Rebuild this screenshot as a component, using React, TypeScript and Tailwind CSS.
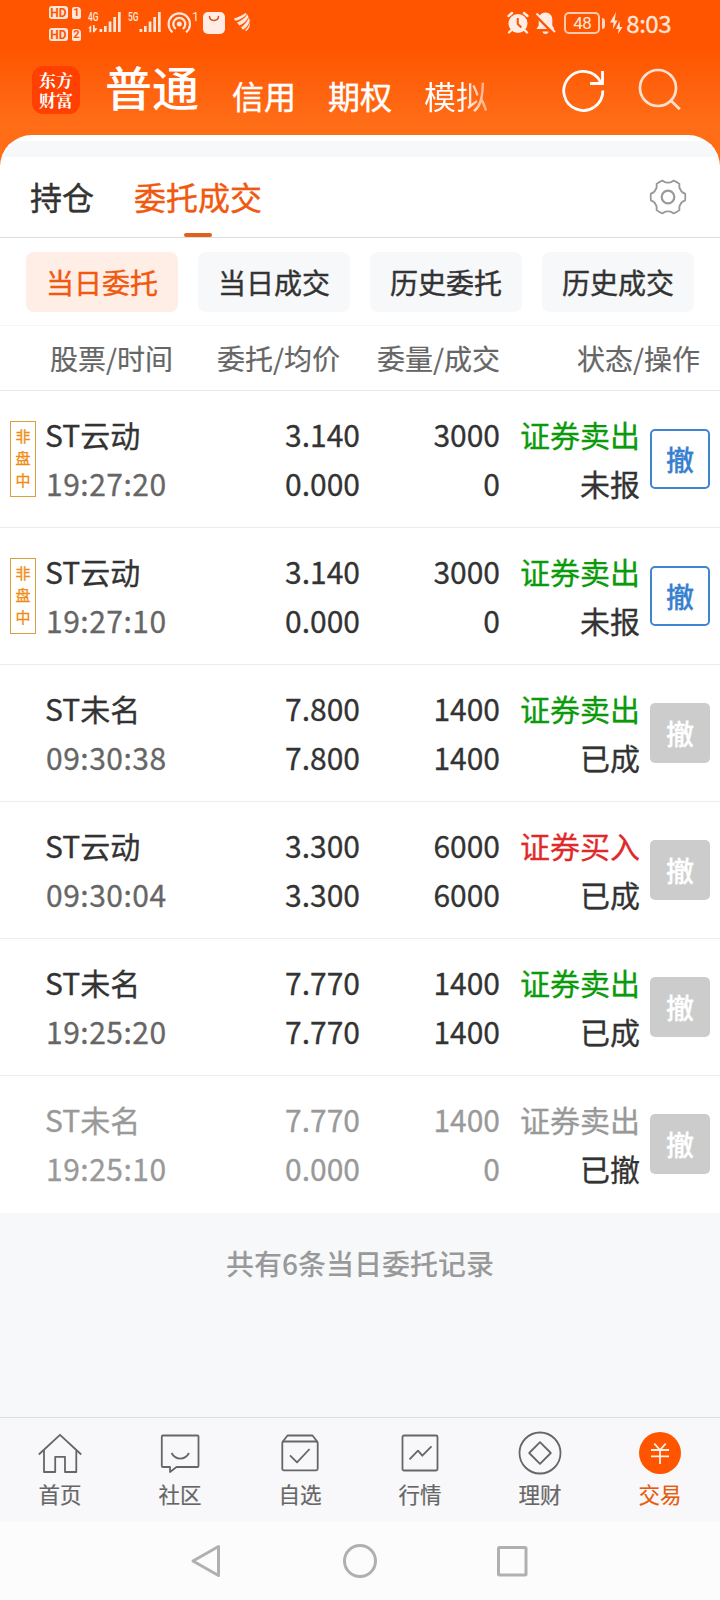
import { ReactNode } from 'react';
import clsx from 'clsx';

interface Order {
  name: string;
  time: string;
  price: string;
  avgPrice: string;
  volume: string;
  filled: string;
  side: string;
  status: string;
  tone: 'sell' | 'buy' | 'muted';
  afterHours?: boolean;
  cancellable?: boolean;
}

const orders: Order[] = [
  { name: 'ST云动', time: '19:27:20', price: '3.140', avgPrice: '0.000', volume: '3000', filled: '0', side: '证券卖出', status: '未报', tone: 'sell', afterHours: true, cancellable: true },
  { name: 'ST云动', time: '19:27:10', price: '3.140', avgPrice: '0.000', volume: '3000', filled: '0', side: '证券卖出', status: '未报', tone: 'sell', afterHours: true, cancellable: true },
  { name: 'ST未名', time: '09:30:38', price: '7.800', avgPrice: '7.800', volume: '1400', filled: '1400', side: '证券卖出', status: '已成', tone: 'sell' },
  { name: 'ST云动', time: '09:30:04', price: '3.300', avgPrice: '3.300', volume: '6000', filled: '6000', side: '证券买入', status: '已成', tone: 'buy' },
  { name: 'ST未名', time: '19:25:20', price: '7.770', avgPrice: '7.770', volume: '1400', filled: '1400', side: '证券卖出', status: '已成', tone: 'sell' },
  { name: 'ST未名', time: '19:25:10', price: '7.770', avgPrice: '0.000', volume: '1400', filled: '0', side: '证券卖出', status: '已撤', tone: 'muted' },
];

const filters = ['当日委托', '当日成交', '历史委托', '历史成交'];

// Six-toothed gear outline centred on 0,0
const gearPath = (() => {
  const point = (r: number, deg: number) => {
    const a = (deg * Math.PI) / 180;
    return `${(r * Math.cos(a)).toFixed(2)} ${(r * Math.sin(a)).toFixed(2)}`;
  };
  let d = `M${point(17.4, -11)}`;
  for (let t = 0; t < 360; t += 60) {
    d += `Q${point(17.6, t)} ${point(17.4, t + 11)}`;
    d += `C${point(15, t + 17)} ${point(14, t + 22)} ${point(14.5, t + 30)}`;
    d += `C${point(14, t + 38)} ${point(15, t + 43)} ${point(17.4, t + 49)}`;
  }
  return d + 'Z';
})();

function HdBadge({ sim }: { sim: string }) {
  return (
    <div className="flex items-center gap-[4px] font-['Roboto',sans-serif] text-[12px] font-bold leading-none text-[#ff5500]">
      <span className="flex h-[13px] w-[19px] items-center justify-center rounded-[3px] bg-[#ffe6da]">HD</span>
      <span className="flex h-[12px] w-[9px] items-center justify-center rounded-[2px] rounded-tr-[4px] bg-[#ffe6da] text-[11px]">{sim}</span>
    </div>
  );
}

function Signal({ label, arrows }: { label: string; arrows?: boolean }) {
  return (
    <svg className="overflow-visible font-['Roboto',sans-serif]" width="34" height="22" viewBox="0 0 34 22" fill="#ffe6da">
      <text x="0" y="9.800" fontSize="12" fontWeight="500" textLength="10.500" lengthAdjust="spacingAndGlyphs">{label}</text>
      {arrows && <path d="M0 17.500l3.200-3.500v7.200H1.500V17zM5 14h1.600v3.200H9.500L6.500 21.200H5z" />}
      <path d="M11.500 18h2.700v3h-2.700zM16 15h2.700v6H16zM20.700 10.500h2.700V21h-2.700zM25.300 6H28v15h-2.700zM30 1h2.700v20H30z" />
    </svg>
  );
}

function StatusBar() {
  return (
    <div className="flex h-[46px] items-start text-[#ffe6da]">
      <div className="ml-[49px] mt-[6px] flex flex-col gap-[9px]">
        <HdBadge sim="1" />
        <HdBadge sim="2" />
      </div>
      <div className="ml-[7px] mt-[11px] flex items-start">
        <Signal label="4G" arrows />
        <div className="ml-[6px]">
          <Signal label="5G" />
        </div>
        <svg className="ml-[5px] overflow-visible font-['Roboto',sans-serif]" width="32" height="24" viewBox="0 0 32 24" fill="none" stroke="currentColor" strokeWidth="2.200">
          <path d="M5.500 21.300a10.700 10.700 0 1 1 13.600 0" />
          <path d="M8.800 17.800a6 6 0 1 1 7 0" />
          <circle cx="12.300" cy="13" r="2.500" fill="currentColor" stroke="none" />
          <text x="25" y="9.500" fontSize="12.500" fill="currentColor" stroke="none">1</text>
        </svg>
        <svg className="ml-[4px] mt-px" width="22" height="22" viewBox="0 0 22 22">
          <rect width="22" height="22" rx="5" fill="#ffede5" />
          <path d="M6.500 4.500c.5 5.200 8.500 5.200 9 0" fill="none" stroke="#d9480b" strokeWidth="1.500" strokeLinecap="round" />
        </svg>
        <svg className="ml-[9px] mt-[2px]" width="17" height="18" viewBox="0 0 17 18" fill="currentColor">
          <path d="M0 5.500C4 4.500 8 2.500 11.500 0L12.800 1.200C9 5 6 6.800 1.200 7.800zM3 9.500C7.500 7.500 10.500 5.500 13.200 1.500L14.600 4C12.500 8 9.500 11 5.500 12.500zM7 14.500C10.500 12 13 9 14.800 4.800L15.900 8C14.700 12 12 15 9 16.800zM11 17.500C13.500 15 15 12.500 16 9.500C16.300 12.500 15 16 12.500 18z" />
        </svg>
      </div>
      <div className="ml-auto mr-[49px] mt-[11px] flex items-start">
        <svg width="22" height="24" viewBox="0 0 22 24">
          <circle cx="11" cy="12.500" r="9.500" fill="#ffede5" />
          <path d="M1.500 5l3.500-3M20.500 5L17 2M4 19.500l-2 2M18 19.500l2 2" stroke="#ffede5" strokeWidth="2.400" fill="none" strokeLinecap="round" />
          <path d="M10.800 7V13l3.500 3.500" stroke="#ff5500" strokeWidth="2" fill="none" />
        </svg>
        <svg className="ml-[6px]" width="21" height="24" viewBox="0 0 21 24" fill="#ffede5">
          <path d="M10.500 1.500c4 0 6.800 3 6.800 7v6l2 3.500H1.500l2.200-3.500v-6c0-4 2.800-7 6.800-7zM7.500 20.500h6c-.5 1.800-1.500 2.500-3 2.500s-2.500-.7-3-2.500z" />
          <path d="M0 4L18 22" stroke="#ff5500" strokeWidth="2.500" />
          <path d="M1.500 2.500L20 21" stroke="#ffede5" strokeWidth="1.900" />
        </svg>
        <div className="ml-[8px] mt-px flex items-center">
          <div className="flex h-[22px] w-[36px] items-center justify-center rounded-[5px] border-2 border-[#ffc9ae] font-['Roboto',sans-serif] text-[17px] leading-none tracking-tight">48</div>
          <div className="ml-[2px] h-[11px] w-[3px] rounded-r bg-[#ffd8c4]" />
        </div>
        <svg className="ml-[5px] mt-px" width="13" height="22" viewBox="0 0 13 22" fill="currentColor">
          <path d="M6 0L0 10.500h3.500L3 17l4.500-8.500H4.700zM9.500 9L6 17h2.700L8 22 12.500 15H9.800z" />
        </svg>
        <span className="ml-[3px] text-[24px] leading-[23px] tracking-[-0.5px] [-webkit-text-stroke:0.300px]">8:03</span>
      </div>
    </div>
  );
}

function Header() {
  return (
    <div className="flex h-[89px] items-start text-white">
      <div className="ml-[32px] mt-[20px] flex size-[48px] flex-col items-center justify-center rounded-[11px] bg-[#ff4000] font-['Noto_Serif_CJK_SC','Noto_Sans_CJK_SC',serif] text-[17px] font-bold leading-[20px]">
        <span>东方</span>
        <span>财富</span>
      </div>
      <div className="ml-[25px] mt-[6px] text-[47px] font-medium leading-[68px]">普通</div>
      <div className="ml-[33px] mt-[29px] flex gap-[32px] text-[32px] leading-[40px] [-webkit-text-stroke:0.400px]">
        <span>信用</span>
        <span>期权</span>
        <span className="bg-linear-to-r from-white from-60% to-white/45 bg-clip-text text-transparent [-webkit-text-stroke:0]">模拟</span>
      </div>
      <svg className="ml-[73px] mt-[21px]" width="46" height="46" viewBox="0 0 46 46" fill="none" stroke="currentColor" strokeWidth="2.800">
        <path d="M41.800 23.500A19.500 19.500 0 1 1 39.800 15.300" />
        <path d="M41.500 4v12.500H29" />
      </svg>
      <svg className="ml-[31px] mt-[21px]" width="46" height="46" viewBox="0 0 46 46" fill="none" stroke="#ffe0cf" strokeWidth="2.700">
        <circle cx="20" cy="21" r="18" />
        <path d="M32.500 33.200L41.800 42.300" />
      </svg>
    </div>
  );
}

function OrderRow({ order }: { order: Order }) {
  const muted = order.tone === 'muted';
  const value = muted ? 'text-[#999999]' : 'text-[#333333]';

  return (
    <div className="flex h-[137px] items-start border-b border-[#ececec] text-[30px] leading-[49px] [-webkit-text-stroke:0.300px] last:border-white">
      <div className="flex w-[45px] shrink-0 pl-[10px] pt-[30px]">
        {order.afterHours && (
          <div className="flex h-[76px] w-[26px] flex-col items-center border border-[#d8a040] pt-[3px] text-[15px] leading-[22px] text-[#f08c10]">
            <span>非</span>
            <span>盘</span>
            <span>中</span>
          </div>
        )}
      </div>
      <div className="w-[155px] pt-[19px]">
        <div className={value}>{order.name}</div>
        <div className={clsx('pl-px tracking-[0.500px]', muted ? 'text-[#999999]' : 'text-[#666666]')}>{order.time}</div>
      </div>
      <div className={clsx('w-[160px] pt-[19px] text-right', value)}>
        <div>{order.price}</div>
        <div>{order.avgPrice}</div>
      </div>
      <div className={clsx('w-[140px] pt-[19px] text-right', value)}>
        <div>{order.volume}</div>
        <div>{order.filled}</div>
      </div>
      <div className="w-[140px] pt-[19px] text-right text-[#333333]">
        <div
          className={clsx(
            order.tone === 'sell' && 'text-[#0a9a0a]',
            order.tone === 'buy' && 'text-[#e02a2a]',
            muted && 'text-[#999999]',
          )}
        >
          {order.side}
        </div>
        <div>{order.status}</div>
      </div>
      <button
        className={clsx(
          'ml-[10px] mt-[38px] flex size-[60px] items-center justify-center rounded-[5px] text-[28px] font-medium',
          order.cancellable ? 'border-2 border-[#3f85d0] text-[#3880d0]' : 'bg-[#cccccc] text-white',
        )}
      >
        撤
      </button>
    </div>
  );
}

function NavItem({ label, active, children }: { label: string; active?: boolean; children: ReactNode }) {
  return (
    <div className="flex w-[120px] flex-col items-center pt-[13px]">
      <svg width="44" height="44" viewBox="0 0 44 44" fill="none" stroke="#666666" strokeWidth="1.800" strokeLinejoin="round">
        {children}
      </svg>
      <span
        className={clsx(
          'mt-[4px] text-[21.500px] leading-[30px] [-webkit-text-stroke:0.200px]',
          active ? 'text-[#e8590c]' : 'text-[#666666]',
        )}
      >
        {label}
      </span>
    </div>
  );
}

export default function App() {
  return (
    <div className="flex h-[1600px] w-[720px] flex-col overflow-hidden bg-[#f7f8fa] font-['Noto_Sans_CJK_SC',sans-serif]">
      <div className="h-[165px] shrink-0 bg-linear-to-b from-[#ff5500] from-30% to-[#ff6d17] to-75%">
        <StatusBar />
        <Header />
      </div>

      <div className="-mt-[30px] shrink-0 overflow-hidden rounded-t-[32px] bg-white pt-[6px]">
        <div className="h-[16px] bg-[#f7f8fa]" />
        <div className="flex h-[81px] items-start border-b border-[#dddddd] text-[32px] leading-[78px] [-webkit-text-stroke:0.400px]">
          <div className="ml-[30px] text-[#333333]">持仓</div>
          <div className="ml-[40px] flex flex-col items-center text-[#f0590f]">
            <span className="h-[76px]">委托成交</span>
            <span className="h-[4px] w-[28px] rounded-full bg-[#e2601a]" />
          </div>
          <svg className="ml-auto mr-[32px] mt-[20px]" width="40" height="40" viewBox="-20 -20 40 40" fill="none" stroke="#999999" strokeLinejoin="round">
            <path d={gearPath} strokeWidth="1.800" />
            <circle r="6.300" strokeWidth="2.200" />
          </svg>
        </div>

        <div className="flex h-[88px] gap-[20px] border-b border-[#f5f5f5] pl-[26px] pt-[14px] [-webkit-text-stroke:0.400px]">
          {filters.map((filter, index) => (
            <div
              key={filter}
              className={clsx(
                'h-[60px] w-[152px] rounded-[8px] text-center text-[28px] leading-[61px]',
                index === 0 ? 'bg-[#ffeee6] text-[#f0590f]' : 'bg-[#f7f8fa] text-[#333333]',
              )}
            >
              {filter}
            </div>
          ))}
        </div>

        <div className="flex h-[65px] border-b border-[#e9e9e9] pl-[50px] text-[28px] leading-[65px] text-[#666666] [-webkit-text-stroke:0.200px]">
          <div className="w-[130px]">股票/时间</div>
          <div className="w-[160px] text-right">委托/均价</div>
          <div className="w-[160px] text-right">委量/成交</div>
          <div className="w-[200px] text-right">状态/操作</div>
        </div>

        <div>
          {orders.map((order, index) => (
            <OrderRow key={index} order={order} />
          ))}
        </div>
      </div>

      <div className="pt-[29px] text-center text-[28px] font-medium leading-[42px] text-[#999999]">共有6条当日委托记录</div>

      <div className="mt-auto flex h-[105px] shrink-0 border-t border-[#dedede] bg-[#f8f8fa]">
        <NavItem label="首页">
          <path d="M.8 23.500L22 3.800l21.200 19.700M6 19v22h11.200V25.800h9.800V41h11.300V19" />
        </NavItem>
        <NavItem label="社区">
          <path d="M4.800 4.500h34.700a1 1 0 0 1 1 1V35a1 1 0 0 1-1 1H18.500L12 41v-5H4.800a1 1 0 0 1-1-1V5.500a1 1 0 0 1 1-1z" />
          <path d="M13.600 22c4 7.500 13.300 7.500 17.400 0" />
        </NavItem>
        <NavItem label="自选">
          <rect x="4.300" y="10.500" width="35.400" height="28.800" rx="1.500" />
          <path d="M4.500 11l5-6.500h25l5 6.500M12 24.300l7 7 12.600-13.300" />
        </NavItem>
        <NavItem label="行情">
          <rect x="4.500" y="4.500" width="35" height="35" rx="1.500" />
          <path d="M11.500 28.300l8.500-8.600 4.300 5L33.500 15.300" />
        </NavItem>
        <NavItem label="理财">
          <circle cx="22" cy="22" r="20.500" />
          <path d="M22 11.200L32.800 22 22 32.800 11.200 22z" />
        </NavItem>
        <NavItem label="交易" active>
          <circle cx="22" cy="22" r="21" fill="#ff5500" stroke="none" />
          <path d="M16.300 12.700l5.700 6.300 5.700-6.300M22 19v14M13 19h18M13 25.300h18" stroke="#fff0e8" />
        </NavItem>
      </div>

      <div className="flex h-[78px] shrink-0 items-center bg-[#fcfcfc] pl-[188px]">
        <svg width="350" height="40" viewBox="0 0 350 40" fill="none" stroke="#b0b0b0" strokeWidth="3" strokeLinejoin="round">
          <path d="M5 20L30.500 5.500v29z" />
          <circle cx="172" cy="20" r="15.500" />
          <rect x="310.500" y="6.500" width="27.500" height="27.500" rx="1" />
        </svg>
      </div>
    </div>
  );
}
